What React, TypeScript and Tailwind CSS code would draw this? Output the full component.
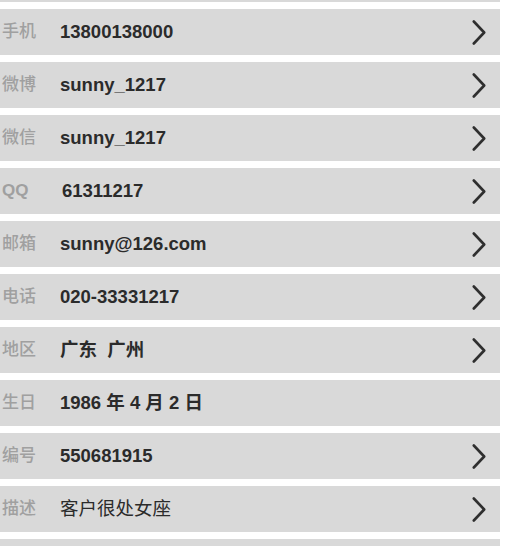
import { ReactNode } from 'react'

type Row = {
  label: string
  value: ReactNode
  bold?: boolean
  arrow?: boolean
  indent?: boolean
}

const rows: Row[] = [
  { label: '手机', value: '13800138000', bold: true, arrow: true },
  { label: '微博', value: 'sunny_1217', bold: true, arrow: true },
  { label: '微信', value: 'sunny_1217', bold: true, arrow: true },
  { label: 'QQ', value: '61311217', bold: true, arrow: true, indent: true },
  { label: '邮箱', value: 'sunny@126.com', bold: true, arrow: true },
  { label: '电话', value: '020-33331217', bold: true, arrow: true },
  { label: '地区', value: '广东  广州', bold: true, arrow: true },
  { label: '生日', value: '1986 年 4 月 2 日', bold: true },
  { label: '编号', value: '550681915', bold: true, arrow: true },
  { label: '描述', value: '客户很处女座', arrow: true },
]

function Chevron() {
  return (
    <svg width="14" height="25" viewBox="0 0 14 25" fill="none">
      <path d="M1.8 1.5 L12.2 12.5 L1.8 23.5" stroke="#2f2f2f" strokeWidth="2.6" strokeLinecap="round" strokeLinejoin="round" />
    </svg>
  )
}

export default function App() {
  return (
    <div
      className="h-[546px] bg-white overflow-hidden"
      style={{ fontFamily: '"Liberation Sans", Arial, "Noto Sans CJK SC", sans-serif' }}
    >
      <div className="flex flex-col gap-[7px] w-[500px]">
        <div className="h-[2px] bg-[#d9d9d9]" />
        {rows.map((row) => (
          <div key={row.label} className="h-[46px] bg-[#d9d9d9] flex items-center pl-[2px] pr-[14px]">
            <span className={`w-[58px] shrink-0 text-[17px] text-[#a0a0a0] ${row.label === 'QQ' ? 'font-bold' : 'font-medium'}`}>
              {row.label}
            </span>
            <span
              className={`flex-1 text-[18.5px] text-[#2b2b2b] whitespace-pre ${row.bold ? 'font-bold' : ''} ${row.indent ? 'pl-[2px]' : ''}`}
            >
              {row.value}
            </span>
            {row.arrow && <Chevron />}
          </div>
        ))}
        <div className="h-[46px] bg-[#d9d9d9]" />
      </div>
    </div>
  )
}
